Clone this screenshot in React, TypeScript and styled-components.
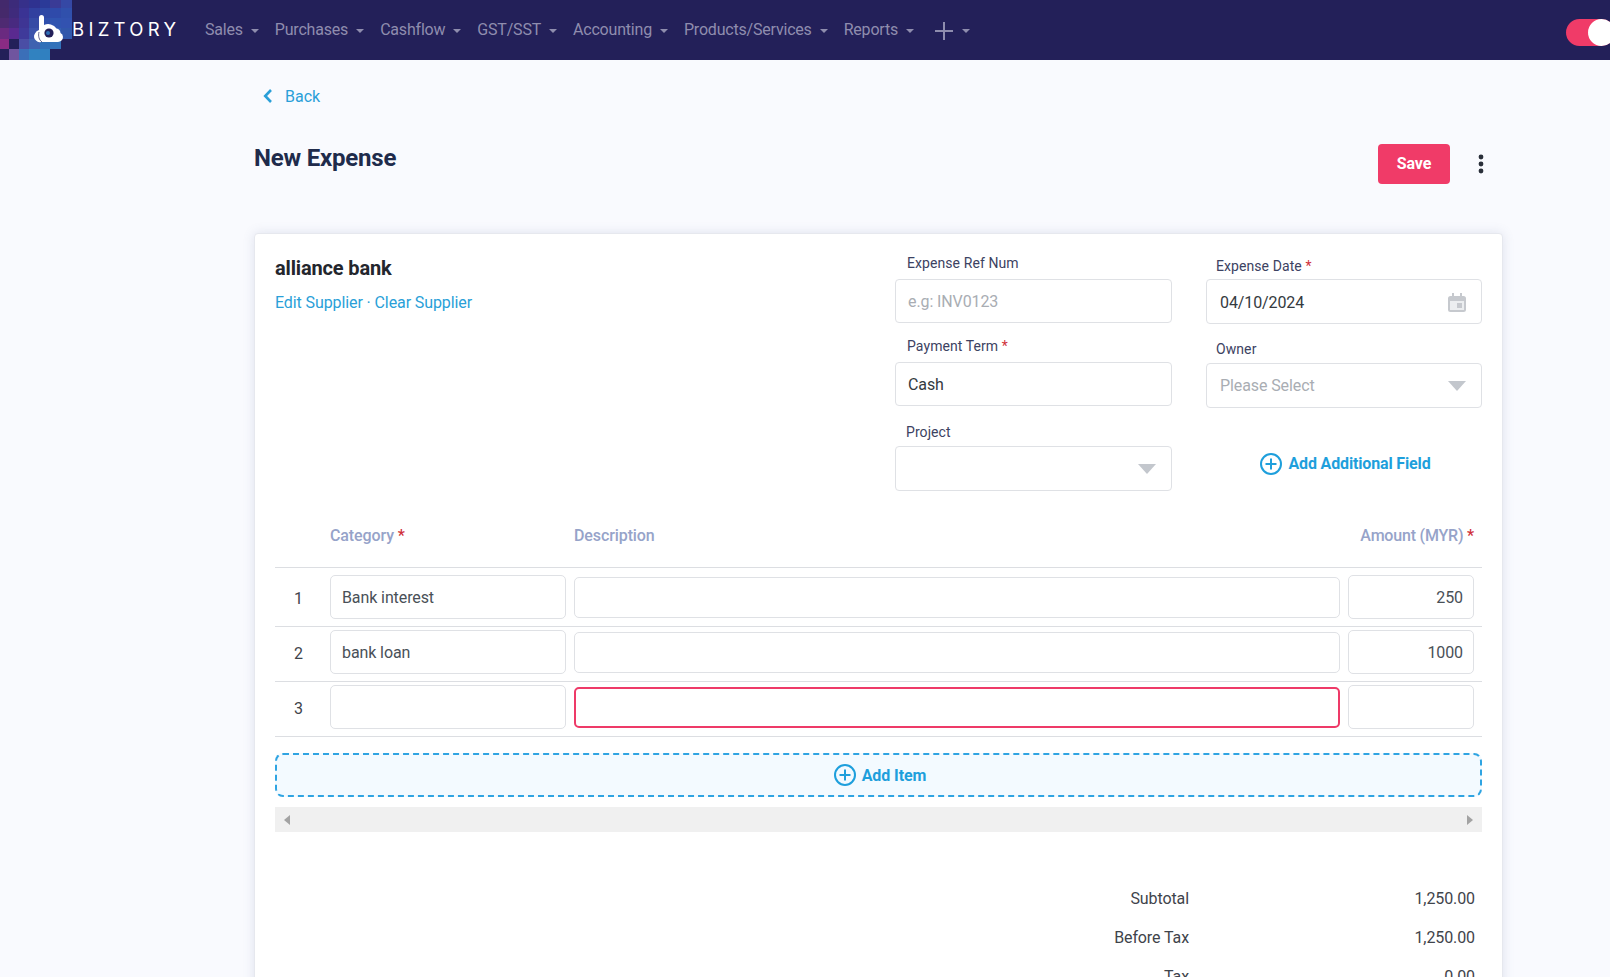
import React from "react";
import styled, { createGlobalStyle } from "styled-components";

const Global = createGlobalStyle`
  html, body { margin: 0; padding: 0; height: 100%; overflow: hidden; background: #f9fafe; }
  body { font-family: Roboto, "Liberation Sans", sans-serif; font-size: 16px; color: #212529; }
  * { box-sizing: border-box; }
`;

const Page = styled.div`
  width: 1610px;
  height: 977px;
  overflow: hidden;
  background: #f9fafe;
`;

const NavBar = styled.header`
  display: flex;
  align-items: center;
  height: 60px;
  background: #232059;
  overflow: hidden;
`;

const LogoArt = styled.svg`
  display: block;
  flex: none;
  width: 72px;
  height: 60px;
`;

const Brand = styled.span`
  flex: none;
  width: 133px;
  margin-top: -2px;
  font-family: Inter, sans-serif;
  font-size: 18.5px;
  font-weight: 400;
  letter-spacing: 4.3px;
  color: #fff;
`;

const NavItem = styled.span`
  display: flex;
  align-items: center;
  gap: 8px;
  margin-right: 16px;
  margin-top: -1px;
  font-size: 16px;
  line-height: 20px;
  letter-spacing: -0.2px;
  color: #8f8dae;
`;

const NavCaret = styled.i`
  display: block;
  width: 0;
  height: 0;
  margin-top: 2px;
  border-left: 4px solid transparent;
  border-right: 4px solid transparent;
  border-top: 4px solid #8f8dae;
`;

const NavPlus = styled.svg`
  display: block;
  width: 20px;
  height: 20px;
  margin-left: 4px;
  margin-top: 3px;
`;

const Toggle = styled.div`
  display: flex;
  justify-content: flex-end;
  flex: none;
  width: 49px;
  height: 27px;
  margin-left: auto;
  margin-right: -5px;
  margin-top: 5px;
  border-radius: 14px;
  background: #f03b68;
`;

const Knob = styled.span`
  width: 27px;
  height: 27px;
  border-radius: 50%;
  background: #fff;
`;

const Main = styled.main`
  width: 1503px;
  padding-left: 254px;
`;

const BackRow = styled.a`
  display: flex;
  align-items: center;
  gap: 13px;
  height: 20px;
  margin-top: 26px;
  padding-left: 9px;
  font-size: 16px;
  color: #2a9fd8;
`;

const TitleRow = styled.div`
  display: flex;
  justify-content: space-between;
  align-items: flex-start;
  height: 40px;
  margin-top: 38px;
  padding-right: 19px;
`;

const Title = styled.h1`
  margin: 0;
  font-size: 24px;
  line-height: 28px;
  font-weight: 700;
  letter-spacing: -0.2px;
  color: #202b4b;
`;

const Actions = styled.div`
  display: flex;
  align-items: center;
  gap: 28px;
`;

const SaveButton = styled.button`
  width: 72px;
  height: 40px;
  padding: 0 0 1px;
  border: 0;
  border-radius: 4px;
  background: #f03b68;
  color: #fff;
  font: 700 16px Roboto, sans-serif;
  letter-spacing: -0.1px;
`;

const Card = styled.section`
  width: 1249px;
  margin-top: 49px;
  padding: 1px 20px 40px 20px;
  background: #fff;
  border: 1px solid #e6e8ee;
  border-radius: 4px;
  box-shadow: 0 0 12px rgba(90, 100, 150, 0.16);
`;

const TopSection = styled.div`
  display: flex;
  justify-content: space-between;
`;

const Supplier = styled.div`
  padding-top: 20px;
`;

const SupplierName = styled.div`
  font-size: 20px;
  line-height: 26px;
  font-weight: 700;
  letter-spacing: -0.15px;
  color: #23262d;
`;

const SupplierLinks = styled.div`
  margin-top: 12px;
  font-size: 16px;
  line-height: 20px;
  letter-spacing: -0.1px;
  color: #2a9fd8;
`;

const Columns = styled.div`
  display: flex;
  gap: 34px;
`;

const Column = styled.div<{ $top: number; $w: number }>`
  display: flex;
  flex-direction: column;
  width: ${(p) => p.$w}px;
  padding-top: ${(p) => p.$top}px;
`;

const Label = styled.label<{ $mb: number; $mt?: number; $indent?: number }>`
  display: block;
  height: 20px;
  margin-top: ${(p) => p.$mt ?? 0}px;
  margin-bottom: ${(p) => p.$mb}px;
  padding-left: ${(p) => p.$indent ?? 12}px;
  font-size: 14px;
  line-height: 20px;
  letter-spacing: 0.08px;
  color: #3c4262;
`;

const Req = styled.span`
  color: #d0303a;
`;

const Box = styled.div<{ $h: number; $color?: string; $pad?: number; $pt?: number }>`
  display: flex;
  align-items: center;
  justify-content: space-between;
  height: ${(p) => p.$h}px;
  padding: ${(p) => p.$pt ?? 1}px 14px 0 ${(p) => p.$pad ?? 12}px;
  background: #fff;
  border: 1px solid #dfe1e5;
  border-radius: 4px;
  font-size: 16px;
  letter-spacing: -0.1px;
  color: ${(p) => p.$color ?? "#343a40"};
`;

const DropArrow = styled.i`
  display: block;
  width: 0;
  height: 0;
  margin-right: 1px;
  border-left: 9px solid transparent;
  border-right: 9px solid transparent;
  border-top: 10px solid #c3c7cd;
`;

const CalendarIcon = styled.svg`
  display: block;
  flex: none;
  width: 18px;
  height: 19px;
  margin-right: 1px;
`;

const AddField = styled.div`
  display: flex;
  align-items: center;
  justify-content: center;
  gap: 6px;
  margin-top: 45px;
  padding-left: 3px;
  font-size: 16px;
  font-weight: 700;
  line-height: 22px;
  letter-spacing: -0.15px;
  color: #1e9fdc;
`;

const PlusCircle = styled.svg`
  display: block;
  flex: none;
  width: 22px;
  height: 22px;
`;

const HeadRow = styled.div`
  display: grid;
  grid-template-columns: 47px 236px 1fr 126px;
  column-gap: 8px;
  padding: 35px 8px 21px 0;
  border-bottom: 1px solid #dcdee2;
  font-size: 16px;
  font-weight: 500;
  line-height: 20px;
  letter-spacing: -0.1px;
  color: #96a3c9;
`;

const HeadAmount = styled.span`
  justify-self: end;
  white-space: nowrap;
  letter-spacing: -0.2px;
`;

const ItemRow = styled.div<{ $top: number }>`
  display: grid;
  grid-template-columns: 47px 236px 1fr 126px;
  column-gap: 8px;
  align-items: center;
  padding: ${(p) => p.$top}px 8px 7px 0;
  border-bottom: 1px solid #dcdee2;
`;

const RowNum = styled.span`
  padding-top: 2px;
  text-align: center;
  font-size: 16px;
  color: #3f444b;
`;

const Cell = styled.div<{ $right?: boolean }>`
  height: 44px;
  padding: 1px 10px 0 11px;
  background: #fff;
  border: 1px solid #dfe1e5;
  border-radius: 5px;
  font-size: 16px;
  line-height: 41px;
  letter-spacing: -0.1px;
  color: #495057;
  text-align: ${(p) => (p.$right ? "right" : "left")};
`;

const DescCell = styled.div<{ $active?: boolean }>`
  height: 41px;
  background: #fff;
  border: ${(p) => (p.$active ? "2px solid #ee3a68" : "1px solid #dfe1e5")};
  border-radius: 5px;
`;

const AddItem = styled.div`
  display: flex;
  align-items: center;
  justify-content: center;
  gap: 6px;
  height: 44px;
  margin-top: 16px;
  padding-left: 3px;
  background: #f3faff;
  border: 2px dashed #2fa4e2;
  border-radius: 8px;
  font-size: 16px;
  font-weight: 700;
  letter-spacing: -0.1px;
  color: #1e9fdc;
`;

const ScrollTrack = styled.div`
  display: flex;
  align-items: center;
  justify-content: space-between;
  height: 25px;
  margin-top: 10px;
  padding: 0 9px;
  background: #f0f0f0;
`;

const ScrollArrow = styled.i<{ $dir: "left" | "right" }>`
  display: block;
  width: 0;
  height: 0;
  border-top: 5.5px solid transparent;
  border-bottom: 5.5px solid transparent;
  ${(p) => (p.$dir === "left" ? "border-right" : "border-left")}: 6px solid #a3a3a3;
`;

const Totals = styled.div`
  margin-top: 47px;
  padding-right: 7px;
`;

const TotalRow = styled.div`
  display: grid;
  grid-template-columns: 1fr 286px;
  width: 486px;
  margin-left: auto;
  height: 39px;
  font-size: 16px;
  line-height: 39px;
  letter-spacing: -0.1px;
  color: #3f444b;
  text-align: right;
`;

const Plus = () => (
  <PlusCircle viewBox="0 0 22 22" fill="none" stroke="#1e9fdc" strokeWidth="2">
    <circle cx="11" cy="11" r="10" />
    <path d="M11 5.5v11M5.5 11h11" />
  </PlusCircle>
);

const mosaic: string[][] = [
  ["#43296c", "#3c2b7a", "#36308a", "#2f3290", "#2b3a98", "#3a3b96", "#3548a5"],
  ["#45296b", "#3f2b7c", "#3a3394", "#31409f", "#2e48a5", "#2f4aaa", "#3050ac"],
  ["#4e2a72", "#482a80", "#3e3594", "#354aa5", "#2f4fac", "#3054b0", "#3252b0"],
  ["#6a2a80", "#5a2a90", "#3f3a9a", "#3b52ab", "#3058b0", "#3560b5", "#3157ab"],
  ["#8a2b84", "#232059", "#4a4ea5", "#3f62b0", "#3070b8", "#3272ba", "#232059"],
  ["#232059", "#70559f", "#3b6fb8", "#3182c0", "#3080c0", "#232059", "#232059"],
];
const xs = [0, 9, 19, 29, 40, 50, 61, 72];
const ys = [0, 8, 18, 28, 39, 49, 60];

const Logo = () => (
  <LogoArt viewBox="0 0 72 60">
    {mosaic.map((row, r) =>
      row.map((c, i) => (
        <rect key={`${r}-${i}`} x={xs[i]} y={ys[r]} width={xs[i + 1] - xs[i]} height={ys[r + 1] - ys[r]} fill={c} />
      ))
    )}
    <path
      d="M39 17.5a2.5 2.5 0 0 1 5 0V25a10 10 0 0 1 12.5 3.5a5 5 0 0 1 4 4.5a4.5 4.5 0 0 1 2.5 4a5 5 0 0 1-5 5H41a5 5 0 0 1-5-1.5a5 5 0 0 1-1-7a6 6 0 0 1 4-3.5Z"
      fill="#fff"
    />
    <circle cx="49" cy="33" r="4.6" fill="#232059" />
    <circle cx="48" cy="33" r="2" fill="#2f6fb8" />
    <path d="M42 42c-3-2-4-6-3-10" stroke="#232059" strokeWidth="0.7" fill="none" />
  </LogoArt>
);

const navItems = ["Sales", "Purchases", "Cashflow", "GST/SST", "Accounting", "Products/Services", "Reports"];

const rows = [
  { top: 7, n: 1, cat: "Bank interest", amt: "250" },
  { top: 3, n: 2, cat: "bank loan", amt: "1000" },
  { top: 3, n: 3, cat: "", amt: "", active: true },
];

export default function App() {
  return (
    <Page>
      <Global />
      <NavBar>
        <Logo />
        <Brand>BIZTORY</Brand>
        {navItems.map((t) => (
          <NavItem key={t}>
            {t}
            <NavCaret />
          </NavItem>
        ))}
        <NavItem>
          <NavPlus viewBox="0 0 20 20" stroke="#8f8dae" strokeWidth="2">
            <path d="M10 1v18M1 10h18" />
          </NavPlus>
          <NavCaret />
        </NavItem>
        <Toggle>
          <Knob />
        </Toggle>
      </NavBar>
      <Main>
        <BackRow>
          <svg width="9" height="14" viewBox="0 0 9 14" fill="none" stroke="#2a9fd8" strokeWidth="2.6">
            <path d="M8 1 2.2 7 8 13" />
          </svg>
          Back
        </BackRow>
        <TitleRow>
          <Title>New Expense</Title>
          <Actions>
            <SaveButton>Save</SaveButton>
            <svg width="6" height="20" viewBox="0 0 6 20" fill="#2a2f3a">
              <circle cx="3" cy="3" r="2.4" />
              <circle cx="3" cy="10" r="2.4" />
              <circle cx="3" cy="17" r="2.4" />
            </svg>
          </Actions>
        </TitleRow>
        <Card>
          <TopSection>
            <Supplier>
              <SupplierName>alliance bank</SupplierName>
              <SupplierLinks>Edit Supplier · Clear Supplier</SupplierLinks>
            </Supplier>
            <Columns>
              <Column $top={18} $w={277}>
                <Label $mb={6}>Expense Ref Num</Label>
                <Box $h={44} $color="#a9adb3">e.g: INV0123</Box>
                <Label $mt={13} $mb={6}>
                  Payment Term <Req>*</Req>
                </Label>
                <Box $h={44}>Cash</Box>
                <Label $mt={16} $mb={4} $indent={11}>Project</Label>
                <Box $h={45}>
                  <span />
                  <DropArrow />
                </Box>
              </Column>
              <Column $top={21} $w={276}>
                <Label $mb={3} $indent={10}>
                  Expense Date <Req>*</Req>
                </Label>
                <Box $h={45} $pad={13}>
                  04/10/2024
                  <CalendarIcon viewBox="0 0 18 19">
                    <path d="M4 0h2v3h6V0h2v3h1.5A2.5 2.5 0 0 1 18 5.5v11a2.5 2.5 0 0 1-2.5 2.5h-13A2.5 2.5 0 0 1 0 16.5v-11A2.5 2.5 0 0 1 2.5 3H4Z" fill="#c6c9ce" />
                    <rect x="2" y="8" width="14" height="9" fill="#eceef0" />
                    <rect x="9" y="10" width="5" height="5" fill="#c6c9ce" />
                  </CalendarIcon>
                </Box>
                <Label $mt={15} $mb={4} $indent={10}>Owner</Label>
                <Box $h={45} $color="#a9adb3" $pad={13} $pt={0}>
                  Please Select
                  <DropArrow />
                </Box>
                <AddField>
                  <Plus />
                  Add Additional Field
                </AddField>
              </Column>
            </Columns>
          </TopSection>
          <HeadRow>
            <span />
            <span>
              Category <Req>*</Req>
            </span>
            <span>Description</span>
            <HeadAmount>
              Amount (MYR) <Req>*</Req>
            </HeadAmount>
          </HeadRow>
          {rows.map((r) => (
            <ItemRow key={r.n} $top={r.top}>
              <RowNum>{r.n}</RowNum>
              <Cell>{r.cat}</Cell>
              <DescCell $active={r.active} />
              <Cell $right>{r.amt}</Cell>
            </ItemRow>
          ))}
          <AddItem>
            <Plus />
            Add Item
          </AddItem>
          <ScrollTrack>
            <ScrollArrow $dir="left" />
            <ScrollArrow $dir="right" />
          </ScrollTrack>
          <Totals>
            <TotalRow>
              <span>Subtotal</span>
              <span>1,250.00</span>
            </TotalRow>
            <TotalRow>
              <span>Before Tax</span>
              <span>1,250.00</span>
            </TotalRow>
            <TotalRow>
              <span>Tax</span>
              <span>0.00</span>
            </TotalRow>
          </Totals>
        </Card>
      </Main>
    </Page>
  );
}
